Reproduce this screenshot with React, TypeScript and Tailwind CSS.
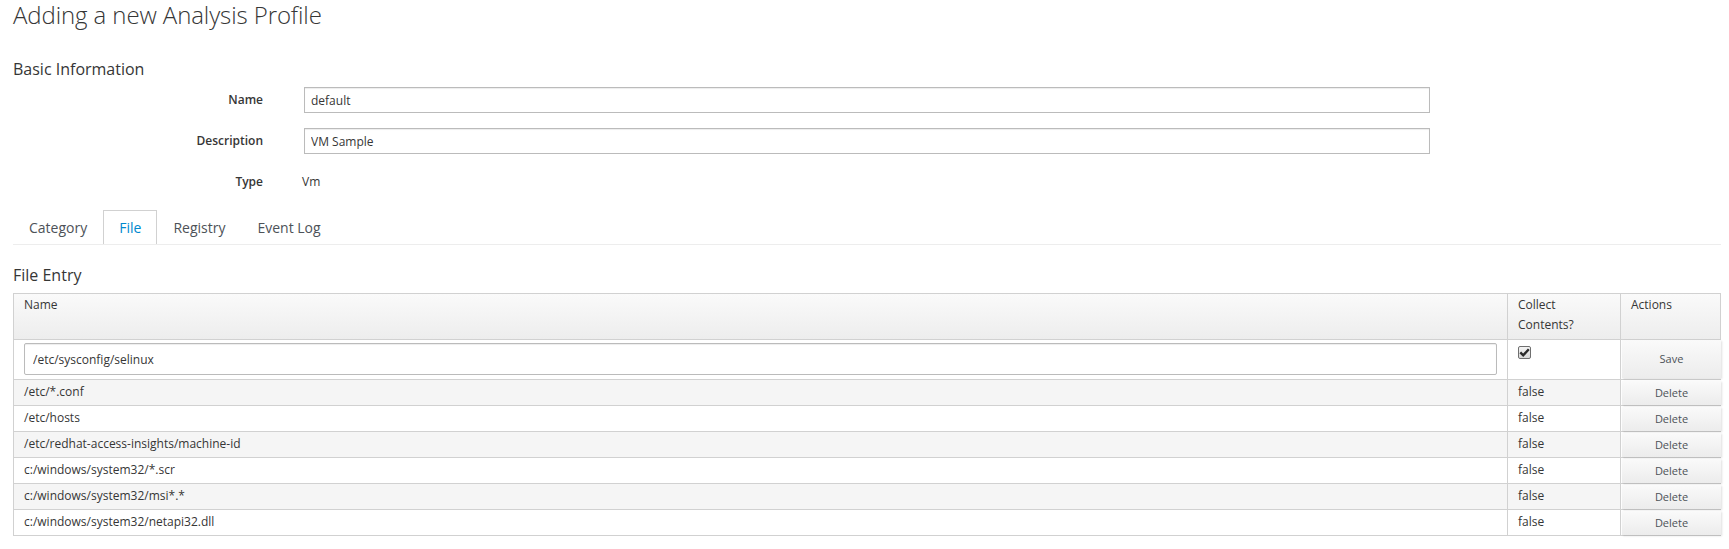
const fileEntries = [
  { name: "/etc/*.conf", collect: "false" },
  { name: "/etc/hosts", collect: "false" },
  { name: "/etc/redhat-access-insights/machine-id", collect: "false" },
  { name: "c:/windows/system32/*.scr", collect: "false" },
  { name: "c:/windows/system32/msi*.*", collect: "false" },
  { name: "c:/windows/system32/netapi32.dll", collect: "false" },
];

const tabs = ["Category", "File", "Registry", "Event Log"];

function ActionButton({ label }: { label: string }) {
  return (
    <button
      type="button"
      className="w-full h-full bg-gradient-to-b from-[#fafafa] to-[#ececec] text-[11px] text-[#4d5258] shadow-[1px_1px_2px_rgba(0,0,0,0.13)]"
    >
      {label}
    </button>
  );
}

export default function App() {
  return (
    <div className="min-h-screen bg-white pl-[13px] pr-[8px] pt-[1px] font-['Open_Sans',sans-serif] text-[12px] text-[#363636]">
      <h1 className="text-[24px] leading-[27px] font-light tracking-[-0.1px]">
        Adding a new Analysis Profile
      </h1>

      <h3 className="mt-[32px] text-[16px] leading-[18px]">Basic Information</h3>

      {/* Basic information form */}
      <div className="mt-[9px] flex flex-col gap-[15px]">
        <div className="flex items-center h-[26px]">
          <label className="w-[250px] text-right font-semibold">Name</label>
          <input
            readOnly
            value="default"
            className="ml-[41px] w-[1126px] h-[26px] border border-[#bbb] px-[6px] text-[12px] text-[#363636] shadow-[inset_0_1px_1px_rgba(3,3,3,0.075)] outline-none"
          />
        </div>
        <div className="flex items-center h-[26px]">
          <label className="w-[250px] text-right font-semibold">Description</label>
          <input
            readOnly
            value="VM Sample"
            className="ml-[41px] w-[1126px] h-[26px] border border-[#bbb] px-[6px] text-[12px] text-[#363636] shadow-[inset_0_1px_1px_rgba(3,3,3,0.075)] outline-none"
          />
        </div>
        <div className="flex items-center h-[26px] leading-[20px]">
          <label className="w-[250px] text-right font-semibold">Type</label>
          <span className="ml-[39px]">Vm</span>
        </div>
      </div>

      {/* Tabs */}
      <ul className="mt-[15px] flex border-b border-[#ededed]">
        {tabs.map((tab) => (
          <li
            key={tab}
            className={
              tab === "File"
                ? "border border-b-0 border-[#d1d1d1] px-[15px] pt-[7px] pb-[6px] text-[14px] leading-[20px] text-[#0088ce] bg-white"
                : "border border-b-0 border-transparent px-[15px] pt-[7px] pb-[6px] text-[14px] leading-[20px] text-[#4d5258]"
            }
          >
            {tab}
          </li>
        ))}
      </ul>

      <h3 className="mt-[21px] text-[16px] leading-[18px]">File Entry</h3>

      {/* File entry table */}
      <div className="mt-[9px] grid grid-cols-[1fr_113px_100px] border-l border-t border-[#d1d1d1] leading-[20px]">
        <div className="h-[46px] border-r border-b border-[#d1d1d1] bg-gradient-to-b from-[#fafafa] to-[#ededed] px-[10px] pt-[1px] font-medium">
          Name
        </div>
        <div className="h-[46px] border-r border-b border-[#d1d1d1] bg-gradient-to-b from-[#fafafa] to-[#ededed] px-[10px] pt-[1px] font-medium">
          Collect Contents?
        </div>
        <div className="h-[46px] border-r border-b border-[#d1d1d1] bg-gradient-to-b from-[#fafafa] to-[#ededed] px-[10px] pt-[1px] font-medium">
          Actions
        </div>

        <div className="h-[40px] border-r border-b border-[#d1d1d1] px-[10px] pt-[3px]">
          <input
            readOnly
            value="/etc/sysconfig/selinux"
            className="w-full h-[32px] rounded-[2px] border border-[#bbb] px-[8px] text-[12px] text-[#363636] shadow-[inset_0_1px_1px_rgba(3,3,3,0.075)] outline-none"
          />
        </div>
        <div className="h-[40px] border-r border-b border-[#d1d1d1] px-[10px] pt-[6px]">
          <span className="flex w-[13px] h-[13px] items-center justify-center rounded-[2px] border border-[#6f6f6f] bg-gradient-to-b from-[#f4f4f4] to-[#d8d8d8]">
            <svg width="11" height="11" viewBox="0 0 11 11">
              <path d="M1.3 5.4 L4.2 8.3 L9.8 2.2" fill="none" stroke="#2b2b2b" strokeWidth="2.4" />
            </svg>
          </span>
        </div>
        <div className="h-[40px] border-b border-[#d1d1d1] pl-[1px] pb-[1px]">
          <ActionButton label="Save" />
        </div>

        {fileEntries.map((entry, index) => (
          <div key={entry.name} className="contents">
            <div
              className={`h-[26px] border-r border-b border-[#d1d1d1] px-[10px] pt-[2px] ${
                index % 2 === 0 ? "bg-[#f5f5f5]" : "bg-white"
              }`}
            >
              {entry.name}
            </div>
            <div
              className={`h-[26px] border-r border-b border-[#d1d1d1] px-[10px] pt-[2px] ${
                index % 2 === 0 ? "bg-[#f5f5f5]" : "bg-white"
              }`}
            >
              {entry.collect}
            </div>
            <div className="h-[26px] border-b border-[#d1d1d1] pl-[1px] pt-[1px]">
              <ActionButton label="Delete" />
            </div>
          </div>
        ))}
      </div>
    </div>
  );
}
